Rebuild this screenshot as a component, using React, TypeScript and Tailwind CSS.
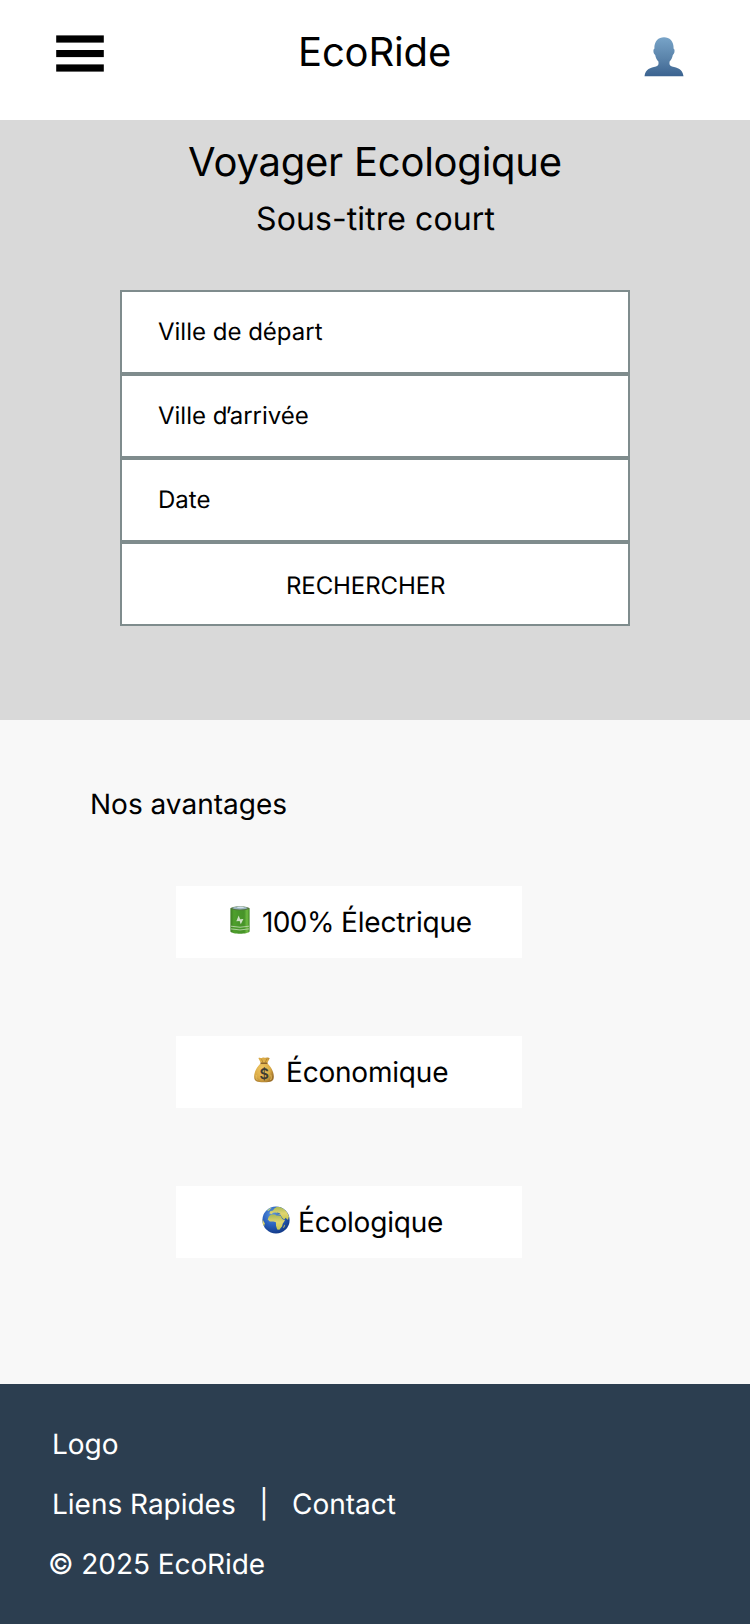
import type { ReactNode } from "react";

function MenuIcon() {
  return (
    <svg viewBox="0 0 48 38" className="h-[38px] w-12">
      <rect x="0.2" y="0.4" width="47.6" height="7.2" />
      <rect x="0.2" y="15" width="47.6" height="7.1" />
      <rect x="0.2" y="29.4" width="47.6" height="7.2" />
    </svg>
  );
}

function UserIcon() {
  return (
    <svg viewBox="0 0 40 40" className="h-10 w-10">
      <defs>
        <linearGradient id="user" x1="0" y1="0" x2="0" y2="1">
          <stop offset="0" stopColor="#78a4c8" />
          <stop offset="0.55" stopColor="#5a83aa" />
          <stop offset="1" stopColor="#3b6390" />
        </linearGradient>
      </defs>
      <path
        d="M20 0.2C25.4 0.2 30 3.8 29.6 11.8C31.2 12.2 30.7 17 28.8 17.9C28.3 20.8 27.2 22.9 25.6 24.6C25.2 27.2 25.5 28.7 28 29.6C33.4 31 38.6 31.9 39.5 39.2H0.5C1.4 31.9 6.6 31 12 29.6C14.5 28.7 14.8 27.2 14.4 24.6C12.8 22.9 11.7 20.8 11.2 17.9C9.3 17 8.8 12.2 10.4 11.8C10 3.8 14.6 0.2 20 0.2Z"
        fill="url(#user)"
      />
    </svg>
  );
}

function BatteryIcon() {
  return (
    <svg viewBox="0 0 20 28" className="h-7 w-5">
      <defs>
        <linearGradient id="battery" x1="0" y1="0" x2="1" y2="0">
          <stop offset="0" stopColor="#3c7c22" />
          <stop offset="0.18" stopColor="#4fa02c" />
          <stop offset="0.4" stopColor="#49982a" />
          <stop offset="0.72" stopColor="#479329" />
          <stop offset="0.87" stopColor="#70bd43" />
          <stop offset="1" stopColor="#3f8424" />
        </linearGradient>
      </defs>
      <path d="M0.4 2.2V25.4C2 28.4 18 28.4 19.6 25.4V2.2Z" fill="url(#battery)" />
      <ellipse cx="10" cy="2.3" rx="9.5" ry="2" fill="#54743f" />
      <ellipse cx="10" cy="2" rx="7.6" ry="1.4" fill="#9bb5bf" />
      <ellipse cx="10.5" cy="1.3" rx="3.4" ry="0.9" fill="#d3dfe8" />
      <path d="M8.7 9.5L6.3 15.2L9.6 14.9L10.8 18.3L13.4 13.1L10.1 13.2Z" fill="#cfdfc5" />
      <path d="M1 20.2Q10 22.3 19 20.2M1 22.9Q10 25 19 22.9" fill="none" stroke="#b9d5a8" strokeWidth="0.9" />
    </svg>
  );
}

function MoneyIcon() {
  return (
    <svg viewBox="0 0 20 26" className="mt-px h-[26px] w-5">
      <defs>
        <radialGradient id="money" cx="0.4" cy="0.45" r="0.65">
          <stop offset="0" stopColor="#efc763" />
          <stop offset="0.65" stopColor="#daaa45" />
          <stop offset="1" stopColor="#9c6f29" />
        </radialGradient>
      </defs>
      <path
        d="M4.4 1.1C6 0 6.7 1.3 8 1C9.5 0 10.6 1 12 0.8C13.6 0.2 14.5 0.3 15.7 1.2L13.2 6.2C17 9.6 20.1 14.8 19.8 20.2C19.6 24.1 17.4 25.2 10 25.2S0.4 24.1 0.2 20.2C-0.1 14.8 3 9.6 6.9 6.2Z"
        fill="url(#money)"
      />
      <path d="M7.6 2.3L8.8 5.4M12.7 2L11.3 5.4" stroke="#a77b28" strokeWidth="0.7" />
      <path d="M6.5 6.2H13.5" stroke="#795020" strokeWidth="1.2" />
      <path d="M2.2 18Q1.3 22 3.4 23.1M16.8 17.8Q18 21.4 16.6 23" fill="none" stroke="#ecc765" strokeWidth="0.8" />
      <text x="10" y="21.7" textAnchor="middle" fontFamily="Inter, sans-serif" fontSize="14.5" fontWeight="600" fill="#3f3b32">
        $
      </text>
    </svg>
  );
}

function GlobeIcon() {
  return (
    <svg viewBox="0 0 28 28" className="h-7 w-7">
      <defs>
        <radialGradient id="ocean" cx="0.38" cy="0.3" r="0.72">
          <stop offset="0" stopColor="#5f97df" />
          <stop offset="0.5" stopColor="#2c64c0" />
          <stop offset="1" stopColor="#123a88" />
        </radialGradient>
        <linearGradient id="land" x1="0" y1="0" x2="0" y2="1">
          <stop offset="0" stopColor="#a8b855" />
          <stop offset="0.5" stopColor="#e0d570" />
          <stop offset="1" stopColor="#c6c74f" />
        </linearGradient>
        <clipPath id="disc">
          <circle cx="14" cy="14" r="13.6" />
        </clipPath>
      </defs>
      <circle cx="14" cy="14" r="13.6" fill="url(#ocean)" />
      <g clipPath="url(#disc)" fill="url(#land)">
        <path d="M6.8 10.6L9 8.5L13 8.6L14.2 9.6L18.6 9.7L20.2 13L23 14.3L20.7 17.8L20.1 20.3L17.4 23.8L15.2 23.6L14 19.8L13.9 16.3L11.5 15.5L7.8 15.6L5.7 13.5Z" />
        <path d="M7.4 7.6L8.1 5.3L11 4.5L12.3 2.6L15 0.7L19.5 1.2L24.5 5L27 10L26 14L23.5 11.7L22.5 13.4L20.7 12.5L18.6 9L15.7 8L13.6 6.5L11.3 6.8L9.6 8Z" />
        <path d="M5 4.5L8.4 1.6L9.5 2.1L6.7 5Z" fill="#a9c68d" />
        <path d="M0.5 13L2.7 17.3L2.2 20.2L0.3 18Z" />
        <path d="M22.4 18.7L23.1 19.1L21.9 22L21.2 21.4Z" />
        <path d="M13.8 7.1L16 8.1L18.5 8.3L18.1 7.4L15.5 6.5Z" fill="#3b75b8" />
      </g>
    </svg>
  );
}

function Advantage({ icon, className, children }: { icon: ReactNode; className: string; children: ReactNode }) {
  return (
    <li className={`flex h-[72px] w-[346px] items-start bg-white pt-5 text-[28px] leading-[34px] tracking-[-0.2px] ${className}`}>
      {icon}
      <span className="-mt-px whitespace-nowrap">{children}</span>
    </li>
  );
}

export default function App() {
  return (
    <div className="flex h-[1624px] w-[750px] flex-col overflow-hidden bg-[#f8f8f8] font-['Inter',sans-serif] text-black [text-rendering:geometricPrecision]">
      <header className="flex h-[120px] shrink-0 items-start bg-white pl-14">
        <button className="mt-[35px]" aria-label="Menu">
          <MenuIcon />
        </button>
        <div className="ml-[194px] mt-7 w-[346px] text-[40px] leading-[48px] tracking-[-0.15px]">EcoRide</div>
        <button className="mt-[37px]" aria-label="Profil">
          <UserIcon />
        </button>
      </header>

      <section className="flex h-[600px] shrink-0 flex-col items-center bg-[#d9d9d9] pt-[18px]">
        <h1 className="text-[40px] leading-[48px] tracking-[-0.23px]">Voyager Ecologique</h1>
        <p className="mt-3.5 pl-px text-[32px] leading-[38px] tracking-[0.09px]">Sous-titre court</p>
        <form className="mt-[52px] w-[510px] text-2xl leading-[29px]">
          <div className="h-[84px] border-2 border-[#7f8c8d] bg-white pl-9 pt-[25px]">Ville de départ</div>
          <div className="h-[84px] border-2 border-[#7f8c8d] bg-white pl-9 pt-[25px]">
            Ville <span className="tracking-[-2px]">d’</span>arrivée
          </div>
          <div className="h-[84px] border-2 border-[#7f8c8d] bg-white pl-9 pt-[25px]">Date</div>
          <div className="h-[84px] border-2 border-[#7f8c8d] bg-white pl-[164px] pt-[27px] tracking-[-0.1px]">RECHERCHER</div>
        </form>
      </section>

      <section className="h-[664px] shrink-0 pt-[67px]">
        <h2 className="ml-[90px] text-[28px] leading-[34px]">Nos avantages</h2>
        <ul className="ml-44 mt-[65px] flex flex-col gap-[78px]">
          <Advantage className="gap-3 pl-[54px]" icon={<BatteryIcon />}>
            <span className="tracking-[-0.6px]">100% </span>Électrique
          </Advantage>
          <Advantage className="gap-3 pl-[78px]" icon={<MoneyIcon />}>
            Économique
          </Advantage>
          <Advantage className="gap-2 pl-[86px]" icon={<GlobeIcon />}>
            Écologique
          </Advantage>
        </ul>
      </section>

      <footer className="flex h-60 shrink-0 flex-col gap-[26px] bg-[#2c3e50] pl-[50px] pt-[43px] text-[28px] leading-[34px] text-white">
        <div className="pl-0.5">Logo</div>
        <div className="whitespace-pre pl-0.5 tracking-[-0.02px]">{"Liens Rapides   |   Contact"}</div>
        <div className="-ml-0.5 tracking-[-0.07px]">© 2025 EcoRide</div>
      </footer>
    </div>
  );
}
